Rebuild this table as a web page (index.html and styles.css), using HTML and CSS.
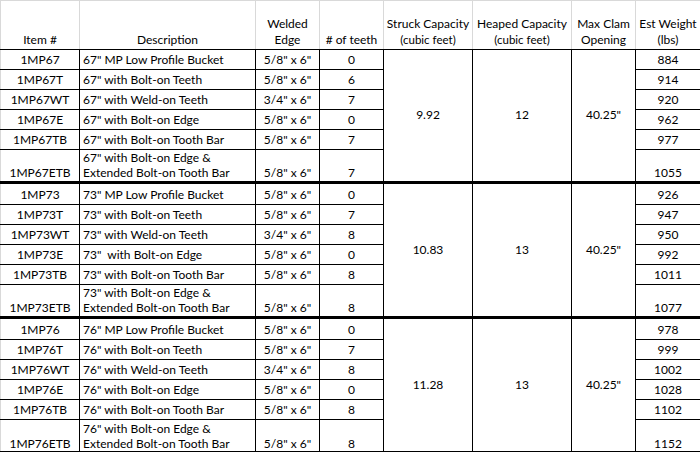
FILE: index.html
```html
<!DOCTYPE html>
<html>
<head>
<meta charset="utf-8">
<link rel="stylesheet" href="styles.css">
</head>
<body>
<table class="sheet">
  <colgroup>
    <col class="c-item"><col class="c-desc"><col class="c-edge"><col class="c-teeth"><col class="c-struck"><col class="c-heaped"><col class="c-clam"><col class="c-weight">
  </colgroup>
  <thead>
    <tr class="head">
      <th>Item #</th>
      <th>Description</th>
      <th>Welded<br>Edge</th>
      <th># of teeth</th>
      <th>Struck Capacity<br><span class="unit">(cubic feet)</span></th>
      <th>Heaped Capacity<br><span class="unit">(cubic feet)</span></th>
      <th>Max Clam<br>Opening</th>
      <th>Est Weight<br>(lbs)</th>
    </tr>
  </thead>
  <tbody>
    <tr><td>1MP67</td><td class="desc">67" MP Low Profile Bucket</td><td>5/8" x 6"</td><td>0</td><td class="merged" rowspan="6">9.92</td><td class="merged" rowspan="6">12</td><td class="merged" rowspan="6">40.25"</td><td>884</td></tr>
    <tr><td>1MP67T</td><td class="desc">67" with Bolt-on Teeth</td><td>5/8" x 6"</td><td>6</td><td>914</td></tr>
    <tr><td>1MP67WT</td><td class="desc">67" with Weld-on Teeth</td><td>3/4" x 6"</td><td>7</td><td>920</td></tr>
    <tr><td>1MP67E</td><td class="desc">67" with Bolt-on Edge</td><td>5/8" x 6"</td><td>0</td><td>962</td></tr>
    <tr><td>1MP67TB</td><td class="desc">67" with Bolt-on Tooth Bar</td><td>5/8" x 6"</td><td>7</td><td>977</td></tr>
    <tr class="tall"><td>1MP67ETB</td><td class="desc">67" with Bolt-on Edge &amp;<br>Extended Bolt-on Tooth Bar</td><td>5/8" x 6"</td><td>7</td><td>1055</td></tr>

    <tr class="group"><td>1MP73</td><td class="desc">73" MP Low Profile Bucket</td><td>5/8" x 6"</td><td>0</td><td class="merged" rowspan="6">10.83</td><td class="merged" rowspan="6">13</td><td class="merged" rowspan="6">40.25"</td><td>926</td></tr>
    <tr><td>1MP73T</td><td class="desc">73" with Bolt-on Teeth</td><td>5/8" x 6"</td><td>7</td><td>947</td></tr>
    <tr><td>1MP73WT</td><td class="desc">73" with Weld-on Teeth</td><td>3/4" x 6"</td><td>8</td><td>950</td></tr>
    <tr><td>1MP73E</td><td class="desc">73"  with Bolt-on Edge</td><td>5/8" x 6"</td><td>0</td><td>992</td></tr>
    <tr><td>1MP73TB</td><td class="desc">73" with Bolt-on Tooth Bar</td><td>5/8" x 6"</td><td>8</td><td>1011</td></tr>
    <tr class="tall"><td>1MP73ETB</td><td class="desc">73" with Bolt-on Edge &amp;<br>Extended Bolt-on Tooth Bar</td><td>5/8" x 6"</td><td>8</td><td>1077</td></tr>

    <tr class="group"><td>1MP76</td><td class="desc">76" MP Low Profile Bucket</td><td>5/8" x 6"</td><td>0</td><td class="merged" rowspan="6">11.28</td><td class="merged" rowspan="6">13</td><td class="merged" rowspan="6">40.25"</td><td>978</td></tr>
    <tr><td>1MP76T</td><td class="desc">76" with Bolt-on Teeth</td><td>5/8" x 6"</td><td>7</td><td>999</td></tr>
    <tr><td>1MP76WT</td><td class="desc">76" with Weld-on Teeth</td><td>3/4" x 6"</td><td>8</td><td>1002</td></tr>
    <tr><td>1MP76E</td><td class="desc">76" with Bolt-on Edge</td><td>5/8" x 6"</td><td>0</td><td>1028</td></tr>
    <tr><td>1MP76TB</td><td class="desc">76" with Bolt-on Tooth Bar</td><td>5/8" x 6"</td><td>8</td><td>1102</td></tr>
    <tr class="tall last"><td>1MP76ETB</td><td class="desc">76" with Bolt-on Edge &amp;<br>Extended Bolt-on Tooth Bar</td><td>5/8" x 6"</td><td>8</td><td>1152</td></tr>
  </tbody>
</table>
</body>
</html>
```
FILE: styles.css
```css
html, body {
  margin: 0;
  padding: 0;
  background: #ffffff;
}

.sheet {
  border-collapse: collapse;
  table-layout: fixed;
  width: 700px;
  font-family: Lato, "Liberation Sans", sans-serif;
  font-size: 12px;
  color: #000;
}

.c-item { width: 79px; }
.c-desc { width: 176px; }
.c-edge { width: 64px; }
.c-teeth { width: 64px; }
.c-struck { width: 89px; }
.c-heaped { width: 99px; }
.c-clam { width: 64px; }
.c-weight { width: 65px; }

.sheet tr { height: 20px; }
.sheet tr.head { height: 49px; }
.sheet tr.tall { height: 33px; }
.sheet tr.tall.last { height: 32px; }
.sheet tr.group { height: 22px; }

.sheet th,
.sheet td {
  padding: 0 0 1px 0;
  line-height: 16px;
  text-align: center;
  vertical-align: bottom;
  white-space: pre;
  overflow: hidden;
}

.sheet th {
  font-weight: normal;
  border: 1px solid #d9d9d9;
  border-bottom: 1px solid #000;
  padding-bottom: 1px;
}

.sheet td {
  border: 1px solid #000;
}

.sheet tbody td:first-child {
  border-left-color: #d9d9d9;
}

.sheet td.desc {
  text-align: left;
  padding-left: 3px;
}

.sheet td.merged {
  vertical-align: middle;
}

.sheet tr.tall td {
  line-height: 15px;
  padding-bottom: 1px;
}

.sheet tr.tall.last td {
  padding-bottom: 0;
}

.sheet tr.group td {
  border-top: 3px solid #000;
}

.unit {
  font-size: 11.5px;
  line-height: 16px;
}
```
